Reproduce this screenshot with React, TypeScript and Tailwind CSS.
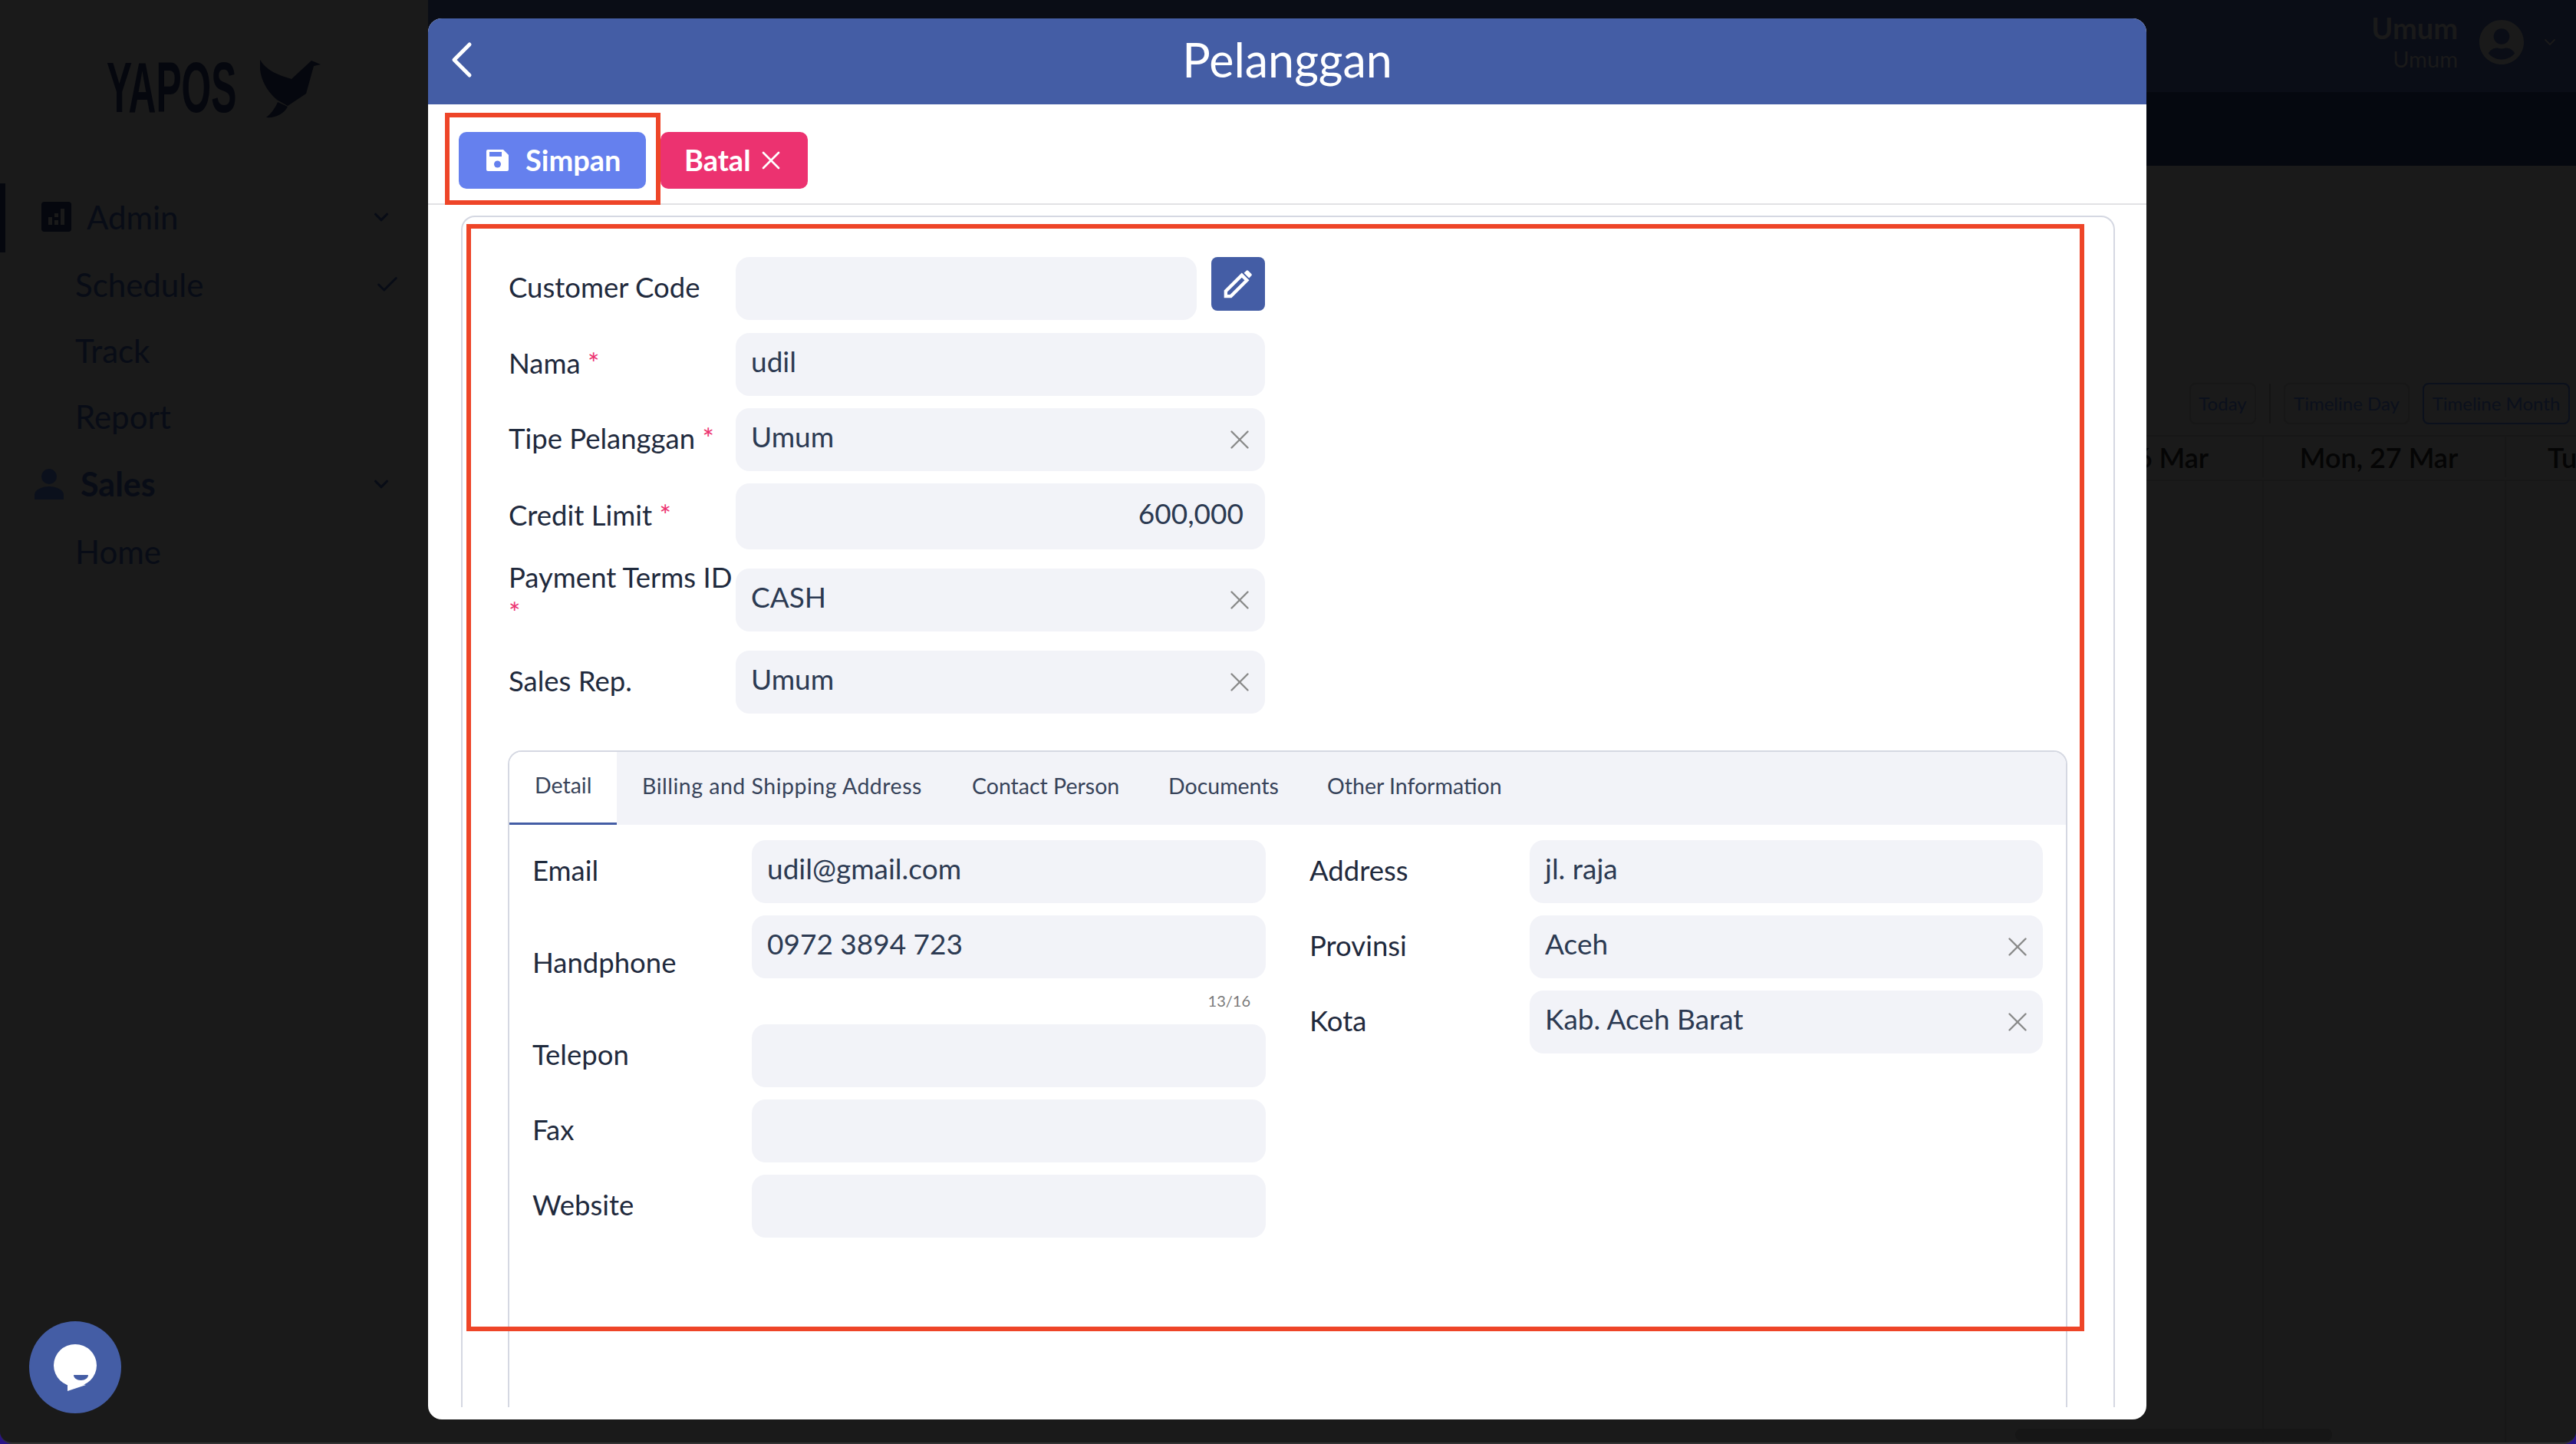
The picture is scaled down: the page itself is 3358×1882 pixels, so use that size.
import { ChevronDown, ChevronLeft, Check, X } from "lucide-react"
import { FaUserCircle } from "react-icons/fa"

const sideItems = [
    { label: "Schedule", check: true },
    { label: "Track" },
    { label: "Report" },
]

function Sidebar() {
    return (
        <aside className="flex flex-col w-[558px] shrink-0 bg-[#1a1a1a] text-[#080c16] text-[42px] leading-[50px]">
            <div className="flex items-center h-[239px] pl-[139px] pb-[11px]">
                <span className="font-['Liberation_Sans',sans-serif] font-bold text-[92px] leading-none scale-x-[0.54] origin-left w-[200px] whitespace-nowrap text-[#05070e]">YAPOS</span>
                <svg viewBox="0 0 80 76" className="w-[80px] h-[76px] mt-[4px]" fill="#05070e">
                    <path d="M0 0C8 14 24 20 41 25L67 1l12 5-9 2-10 36-24 16-14-8C6 38-2 20 0 0z" />
                    <path d="M23 55l13 6C30 72 18 76 8 75c7-5 12-13 15-20z" />
                </svg>
            </div>
            <div className="flex items-center h-[90px] border-l-[7px] border-[#05070e] pl-[47px] pr-[46px] pb-[3px]">
                <svg viewBox="0 0 39 39" className="w-[39px] h-[39px]">
                    <rect width="39" height="39" rx="4" fill="#05070e" />
                    <path d="M9 20h5v10H9zM17 24h5v6h-5zM17 15h5v5h-5zM25 9h5v21h-5z" fill="#1a1a1a" />
                </svg>
                <span className="ml-[20px] flex-1">Admin</span>
                <ChevronDown className="w-[30px] h-[30px]" strokeWidth={2.5} />
            </div>
            {sideItems.map((item) => (
                <div key={item.label} className="flex items-center justify-between h-[86px] pl-[98px] pr-[36px] pb-[3px]">
                    <span>{item.label}</span>
                    {item.check && <Check className="w-[34px] h-[34px]" />}
                </div>
            ))}
            <div className="flex items-center h-[90px] pl-[45px] pr-[46px] pb-[3px]">
                <svg viewBox="0 0 38 40" className="w-[38px] h-[40px]" fill="#0b101c">
                    <circle cx="19" cy="10" r="10" />
                    <path d="M0 40v-6c0-7 10-11 19-11s19 4 19 11v6z" />
                </svg>
                <span className="ml-[22px] flex-1 font-bold text-[43px]">Sales</span>
                <ChevronDown className="w-[30px] h-[30px]" strokeWidth={2.5} />
            </div>
            <div className="flex items-center h-[86px] pl-[98px] pb-[3px]">Home</div>
        </aside>
    )
}

function Background() {
    return (
        <div className="flex-1 flex flex-col">
            <div className="flex items-center justify-end h-[120px] bg-[#0a0d16] pr-[22px] pb-[10px] text-[#1a1a1a]">
                <div className="flex flex-col items-end mr-[27px]">
                    <span className="font-bold text-[38px] leading-[44px]">Umum</span>
                    <span className="text-[29px] leading-[38px]">Umum</span>
                </div>
                <FaUserCircle className="w-[60px] h-[60px]" />
                <ChevronDown className="w-[24px] h-[24px] ml-[21px]" />
            </div>
            <div className="h-[96px] bg-[#05080f]"></div>
            <div className="flex-1 bg-[#1a1a1a] flex flex-col">
                <div className="flex justify-end items-center gap-[17px] pt-[283px] pr-[8px] text-[24px] text-[#0b101c]">
                    <span className="flex items-center justify-center h-[54px] w-[87px] border-2 border-[#171717] rounded-[8px]">Today</span>
                    <span className="w-[2px] h-[52px] bg-[#141414]"></span>
                    <span className="flex items-center justify-center h-[54px] w-[164px] border-2 border-[#171717] rounded-[8px]">Timeline Day</span>
                    <span className="flex items-center justify-center h-[54px] w-[192px] border-2 border-[#0b101c] rounded-[8px]">Timeline Month</span>
                </div>
                <div className="flex justify-end mt-[14px] h-[60px] pb-[3px] border-y-2 border-[#171717] text-[36px] font-semibold text-[#050505] overflow-hidden">
                    <span className="flex items-center justify-center w-[318px] pr-[14px] whitespace-nowrap">Sun, 26 Mar</span>
                    <span className="flex items-center justify-center w-[318px] pr-[14px] border-x-2 border-[#171717] whitespace-nowrap">Mon, 27 Mar</span>
                    <span className="flex items-center pl-[54px] w-[91px] whitespace-nowrap">Tue</span>
                </div>
                <div className="flex-1 flex justify-end">
                    <div className="w-[318px] border-x-2 border-[#171717]"></div>
                    <div className="w-[91px]"></div>
                </div>
            </div>
        </div>
    )
}

function Label({ text, required, className }: { text: string; required?: boolean; className?: string }) {
    return (
        <label className={`text-[36.5px] leading-[46px] text-[#1f2a3d] pb-[4px] ${className ?? ""}`}>
            {text}
            {required && <span className="text-[#ec3270]"> *</span>}
        </label>
    )
}

function Field({ value, clearable, right, className }: { value?: string; clearable?: boolean; right?: boolean; className?: string }) {
    return (
        <div className={`flex items-center h-[82px] bg-[#f2f3f8] rounded-[18px] pl-[20px] pr-[12px] text-[37px] text-[#2c3a52] ${className ?? ""}`}>
            <span className={`flex-1 pb-[8px] ${right ? "text-right pr-[16px]" : ""}`}>{value}</span>
            {clearable && <X className="w-[42px] h-[42px] text-[#8a8a8a]" strokeWidth={1.4} />}
        </div>
    )
}

function TopForm() {
    return (
        <div className="flex flex-col w-[986px] ml-[60px] pt-[52px]">
            <div className="flex items-center">
                <Label text="Customer Code" className="w-[296px]" />
                <Field className="w-[601px]" />
                <button className="flex items-center justify-center w-[70px] h-[70px] ml-[19px] mb-[12px] bg-[#445da5] rounded-[8px]">
                    <svg viewBox="0 0 40 40" className="w-[38px] h-[38px]" fill="none">
                        <path d="M3 37v-7L25 8l7 7-22 22z" stroke="#fff" strokeWidth="4.6" />
                        <path d="M28 5l3-3c1-1 2-1 3 0l4 4c1 1 1 2 0 3l-3 3z" fill="#fff" />
                    </svg>
                </button>
            </div>
            <div className="flex items-center mt-[17px]">
                <Label text="Nama" required className="w-[296px]" />
                <Field value="udil" className="w-[690px]" />
            </div>
            <div className="flex items-center mt-[16px]">
                <Label text="Tipe Pelanggan" required className="w-[296px]" />
                <Field value="Umum" clearable className="w-[690px]" />
            </div>
            <div className="flex items-center mt-[16px]">
                <Label text="Credit Limit" required className="w-[296px]" />
                <Field value="600,000" right className="w-[690px] h-[86px]" />
            </div>
            <div className="flex items-center h-[82px] mt-[25px]">
                <Label text="Payment Terms ID" required className="w-[296px] mt-[-10px]" />
                <Field value="CASH" clearable className="w-[690px]" />
            </div>
            <div className="flex items-center mt-[25px]">
                <Label text="Sales Rep." className="w-[296px]" />
                <Field value="Umum" clearable className="w-[690px]" />
            </div>
        </div>
    )
}

const tabs = [
    { label: "Detail", width: "w-[140px]" },
    { label: "Billing and Shipping Address", width: "w-[430px] tracking-[0.5px]" },
    { label: "Contact Person", width: "w-[256px]" },
    { label: "Documents", width: "w-[207px]" },
    { label: "Other Information", width: "w-[300px]" },
]

function Tabs() {
    return (
        <div className="flex-1 flex flex-col mt-[48px] ml-[59px] mr-[60px] border-x-2 border-t-2 border-[#d5d8e2] rounded-t-[18px] overflow-hidden">
            <div className="flex h-[95px] bg-[#f2f3f8] text-[28.5px] text-[#37435a]">
                {tabs.map((tab, i) => (
                    <div key={tab.label} className={`flex items-center pl-[33px] pb-[6px] whitespace-nowrap ${tab.width} ${i === 0 ? "bg-white border-b-[3px] border-[#445da5]" : ""}`}>
                        {tab.label}
                    </div>
                ))}
            </div>
            <div className="flex gap-[57px] px-[30px] pt-[20px]">
                <div className="flex flex-col w-[956px]">
                    <div className="flex items-center">
                        <Label text="Email" className="w-[286px]" />
                        <Field value="udil@gmail.com" className="flex-1" />
                    </div>
                    <div className="flex mt-[16px]">
                        <Label text="Handphone" className="w-[286px] pt-[38px]" />
                        <div className="flex-1">
                            <Field value="0972 3894 723" />
                            <div className="text-right text-[20px] leading-[24px] text-[#7a7a7a] pr-[20px] mt-[17px]">13/16</div>
                        </div>
                    </div>
                    <div className="flex items-center mt-[19px]">
                        <Label text="Telepon" className="w-[286px]" />
                        <Field className="flex-1" />
                    </div>
                    <div className="flex items-center mt-[16px]">
                        <Label text="Fax" className="w-[286px]" />
                        <Field className="flex-1" />
                    </div>
                    <div className="flex items-center mt-[16px]">
                        <Label text="Website" className="w-[286px]" />
                        <Field className="flex-1" />
                    </div>
                </div>
                <div className="flex flex-col flex-1 gap-[16px]">
                    <div className="flex items-center">
                        <Label text="Address" className="w-[287px]" />
                        <Field value="jl. raja" className="flex-1" />
                    </div>
                    <div className="flex items-center">
                        <Label text="Provinsi" className="w-[287px]" />
                        <Field value="Aceh" clearable className="flex-1" />
                    </div>
                    <div className="flex items-center">
                        <Label text="Kota" className="w-[287px]" />
                        <Field value="Kab. Aceh Barat" clearable className="flex-1" />
                    </div>
                </div>
            </div>
        </div>
    )
}

function Modal() {
    return (
        <div className="absolute left-[558px] top-[24px] flex flex-col w-[2240px] h-[1826px] bg-white rounded-[18px] overflow-hidden">
            <div className="relative flex items-center justify-center h-[112px] pb-[4px] bg-[#445da5] text-white text-[61px]">
                <ChevronLeft className="absolute left-[4px] top-[14px] w-[80px] h-[80px]" strokeWidth={1.5} />
                Pelanggan
            </div>
            <div className="flex items-center gap-[19px] h-[131px] pl-[40px] pt-[16px] border-b-2 border-[#e2e2e4]">
                <button className="flex items-center gap-[22px] h-[74px] w-[244px] pl-[36px] bg-[#6580ee] rounded-[10px] text-white font-bold text-[38px]">
                    <svg viewBox="0 0 29 28" className="w-[29px] h-[28px]">
                        <path d="M2 0h20l7 7v19a2 2 0 0 1-2 2H2a2 2 0 0 1-2-2V2a2 2 0 0 1 2-2z" fill="#fff" />
                        <rect x="4" y="3" width="16" height="6" fill="#6580ee" />
                        <circle cx="14.5" cy="19" r="4.5" fill="#6580ee" />
                    </svg>
                    Simpan
                </button>
                <button className="flex items-center gap-[6px] h-[74px] w-[192px] pl-[31px] bg-[#ec3270] rounded-[10px] text-white font-bold text-[38px]">
                    Batal
                    <X className="w-[40px] h-[40px]" strokeWidth={1.6} />
                </button>
            </div>
            <div className="flex-1 flex flex-col mt-[14px] ml-[43px] mr-[41px] mb-[16px] border-x-2 border-t-2 border-[#d5d8e2] rounded-t-[18px]">
                <TopForm />
                <Tabs />
            </div>
        </div>
    )
}

export default function App() {
    return (
        <div className="relative w-[3358px] h-[1882px] overflow-hidden bg-[#2a1487] font-['Lato',sans-serif]">
            <div className="flex w-full h-full rounded-b-[16px] overflow-hidden border-b-2 border-[#333333]">
                <Sidebar />
                <Background />
            </div>
            <div className="absolute left-[2627px] top-[1862px] w-[413px] h-[16px] rounded-full bg-[#161616]"></div>
            <Modal />
            {/* annotation frames drawn over the screenshot */}
            <div className="absolute left-[580px] top-[147px] w-[281px] h-[120px] border-[6px] border-[#ee4528]"></div>
            <div className="absolute left-[608px] top-[292px] w-[2109px] h-[1443px] border-[6px] border-[#ee4528]"></div>
            <div className="absolute left-[38px] top-[1722px] flex items-center justify-center w-[120px] h-[120px] rounded-full bg-[#445da5]">
                <svg viewBox="0 0 56 62" className="w-[56px] h-[62px] mt-[2px]">
                    <ellipse cx="28" cy="27.5" rx="28" ry="27.5" fill="#fff" />
                    <path d="M18 48v13l24-8z" fill="#fff" />
                    <path d="M26 40h19c0 4-4 7-9.5 7S26 44 26 40z" fill="#445da5" />
                </svg>
            </div>
        </div>
    )
}
